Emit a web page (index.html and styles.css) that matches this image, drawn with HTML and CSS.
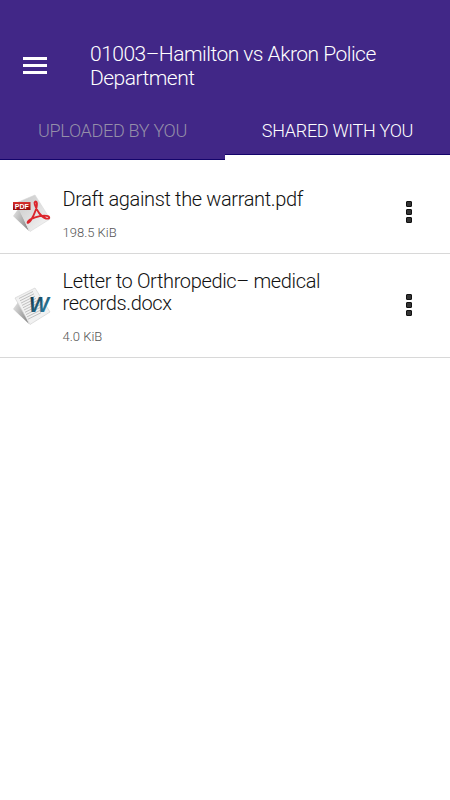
FILE: index.html
```html
<!DOCTYPE html>
<html lang="en">
<head>
  <meta charset="UTF-8">
  <meta name="viewport" content="width=device-width, initial-scale=1.0">
  <title>Case documents</title>
  <link rel="stylesheet" href="styles.css">
</head>
<body>

<header class="header">
  <div class="toolbar">
    <button class="menu" type="button" aria-label="Menu">
      <span></span>
      <span></span>
      <span></span>
    </button>
    <h1 class="title">01003–Hamilton vs Akron Police Department</h1>
  </div>
  <nav class="tabs">
    <a href="#" class="tab">UPLOADED BY YOU</a>
    <a href="#" class="tab active">SHARED WITH YOU</a>
  </nav>
</header>

<ul class="files">
  <li class="file">
    <svg class="file-icon" width="40" height="40" viewBox="0 0 40 40">
      <defs>
        <linearGradient id="paper" x1="0" y1="0" x2="1" y2="1">
          <stop offset="0" stop-color="#c4c4c4"/>
          <stop offset="1" stop-color="#fafafa"/>
        </linearGradient>
        <linearGradient id="shade" x1="0" y1="0" x2="1" y2="0.6">
          <stop offset="0" stop-color="#e9e9e9"/>
          <stop offset="1" stop-color="#8f8f8f"/>
        </linearGradient>
        <linearGradient id="label" x1="0" y1="0" x2="0" y2="1">
          <stop offset="0" stop-color="#d8302c"/>
          <stop offset="1" stop-color="#980808"/>
        </linearGradient>
      </defs>
      <path d="M1 23 L7 15 L17 38 Z" fill="url(#shade)"/>
      <path d="M4 10 L23 2 L38 26 L18 38.5 Z" fill="url(#paper)" stroke="#d6d6d6" stroke-width="0.6"/>
      <rect x="1" y="9" width="17.5" height="8" fill="url(#label)"/>
      <text class="pdf-label" x="2.8" y="15.7" textLength="14" lengthAdjust="spacingAndGlyphs">PDF</text>
      <path d="M16 28.5 C14.5 31 17.5 29.5 19 27 C22.5 21.5 25.8 13 24.7 9.5 C24 7.5 21.8 9 22.8 11.5 C24.5 17 29 24.3 34 25.5 C38.5 26.4 38 23.2 34.5 22.9 C27 22.2 18 25.5 16 28.5 Z" fill="none" stroke="#dc252c" stroke-width="1.9"/>
    </svg>
    <div class="file-info">
      <div class="file-name">Draft against the warrant.pdf</div>
      <div class="file-size">198.5 KiB</div>
    </div>
    <button class="more" type="button" aria-label="More options">
      <span></span>
      <span></span>
      <span></span>
    </button>
  </li>
  <li class="file">
    <svg class="file-icon" width="40" height="40" viewBox="0 0 40 40">
      <defs>
        <linearGradient id="word" x1="0" y1="0" x2="1" y2="1">
          <stop offset="0.2" stop-color="#153f54"/>
          <stop offset="1" stop-color="#3293bd"/>
        </linearGradient>
      </defs>
      <path d="M1 23 L7 15 L17 38 Z" fill="url(#shade)"/>
      <path d="M3 12 L23 2 L38 26 L18 38.5 Z" fill="#f1f1f1" stroke="#d2d2d2" stroke-width="0.7"/>
      <path d="M7 12.5 L21 5.5 M8 14.8 L22 7.8 M9 17.1 L23 10.1 M10 19.4 L24 12.4 M11 21.7 L26 14.2 M12 24 L27 16.5 M13 26.3 L29 18.3 M14 28.6 L30 20.6 M15 30.9 L31 22.9 M16 33.2 L29 26.7" fill="none" stroke="#b2b2b2" stroke-width="0.8"/>
      <text class="word-label" x="17" y="26" textLength="20" lengthAdjust="spacingAndGlyphs" fill="url(#word)">W</text>
    </svg>
    <div class="file-info">
      <div class="file-name">Letter to Orthropedic– medical records.docx</div>
      <div class="file-size">4.0 KiB</div>
    </div>
    <button class="more" type="button" aria-label="More options">
      <span></span>
      <span></span>
      <span></span>
    </button>
  </li>
</ul>

</body>
</html>
```

FILE: styles.css
```css
* {
  box-sizing: border-box;
}
body {
  margin: 0;
  background-color: #fff;
  color: #111;
  font-family: Roboto, sans-serif;
  font-weight: 300;
}
.header {
  height: 160px;
  padding-top: 30px;
  background-color: #412787;
  color: #fff;
}
.toolbar {
  display: flex;
  align-items: center;
  height: 72px;
  padding-left: 23px;
}
.menu {
  display: flex;
  flex-direction: column;
  gap: 4px;
  width: 24px;
  margin: 0 43px 2px 0;
  padding: 0;
  border: none;
  background: none;
  cursor: pointer;
}
.menu span {
  height: 3px;
  background-color: #fff;
}
.title {
  width: 300px;
  margin: 0;
  font-size: 21px;
  font-weight: 300;
  line-height: 24px;
  letter-spacing: -0.52px;
}
.tabs {
  display: flex;
  height: 58px;
}
.tab {
  flex: 1;
  padding-top: 17px;
  border-bottom: 1px solid #14046b;
  color: #958fa9;
  font-size: 18px;
  line-height: 24px;
  letter-spacing: -0.3px;
  text-align: center;
  text-decoration: none;
}
.tab.active {
  border-bottom: 5px solid #fff;
  box-shadow: inset 0 -1px #14046b;
  color: #fff;
}
.files {
  margin: 0;
  padding: 12px 0 0;
  list-style: none;
}
.file {
  display: flex;
  align-items: center;
  padding: 16px 38px 11px 12px;
  border-bottom: 1px solid #d8d8d8;
}
.file-icon {
  flex: none;
  margin: 0 10.5px 4px 0;
}
.file-info {
  width: 280px;
}
.file-name {
  font-size: 20px;
  line-height: 22.5px;
  letter-spacing: -0.36px;
}
.file-size {
  margin-top: 13px;
  color: #555;
  font-size: 13px;
  line-height: 18px;
}
.more {
  display: flex;
  flex-direction: column;
  gap: 2px;
  margin: 0 0 6px auto;
  padding: 0;
  border: none;
  background: none;
  cursor: pointer;
}
.more span {
  width: 6px;
  height: 6px;
  border: 1px solid #111;
  border-radius: 1px;
  background-color: #333;
}
.pdf-label {
  fill: #fff;
  font-family: "Liberation Sans", sans-serif;
  font-size: 7px;
  font-weight: bold;
}
.word-label {
  font-family: "Liberation Sans", sans-serif;
  font-size: 22px;
  font-style: italic;
  font-weight: bold;
}
```
